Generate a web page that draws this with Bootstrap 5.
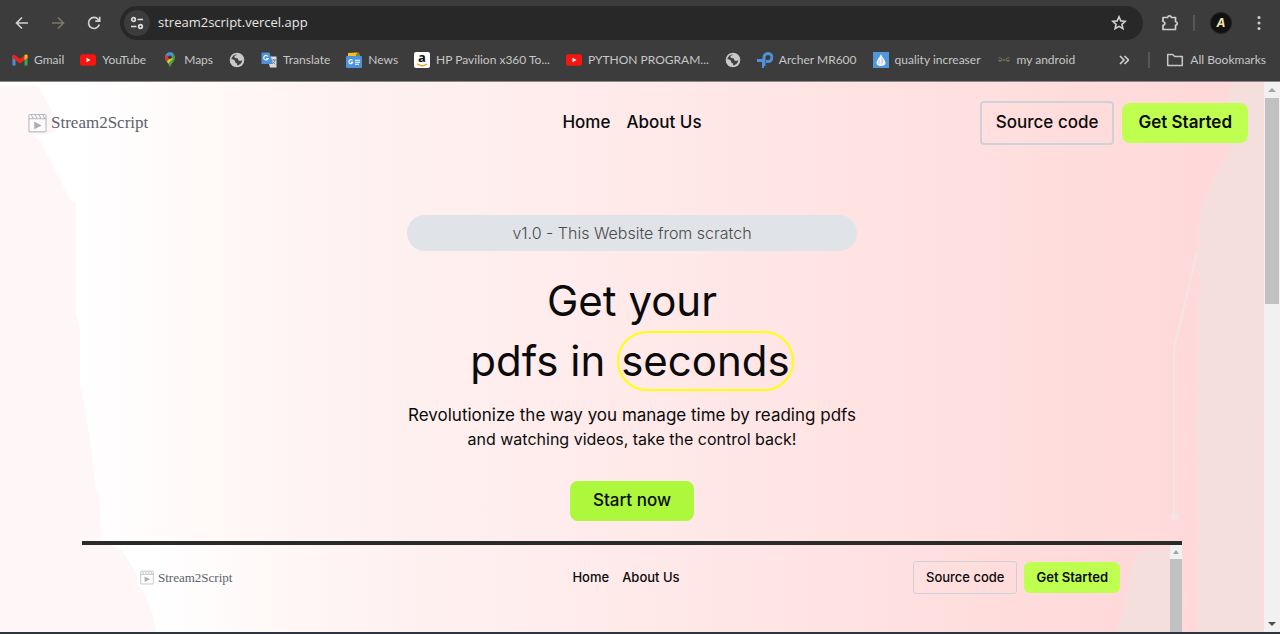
<!DOCTYPE html>
<html lang="en">
<head>
<meta charset="utf-8">
<meta name="viewport" content="width=device-width, initial-scale=1">
<title>Stream2Script</title>
<link href="https://cdn.jsdelivr.net/npm/bootstrap@5.3.0/dist/css/bootstrap.min.css" rel="stylesheet">
<style>
  :root { --ui: "Open Sans", "Noto Sans", sans-serif; --page: Inter, "Open Sans", sans-serif; }
  body { background: #2f353f; font-family: var(--page); color: #0b0b0b; }
  a { color: inherit; text-decoration: none; }
  svg { display: block; flex: none; }

  .browser-top { background: #3c3c3c; color: #c7c7c7; font-family: var(--ui); border-bottom: 1px solid #8b8785; }
  .toolbar-row { height: 46px; padding: 0 13px 0 14px; }
  .tool-btn { width: 16px; height: 24px; padding: 0; border: 0; background: none; color: #d0d0d0; display: grid; place-items: center; }
  .tool-btn.dim { color: #7d766f; }
  .address { height: 34px; background: #282828; padding: 0 16px 0 4px; margin: 0 18px 0 2px; }
  .address input { background: none; border: 0; outline: 0; color: #e6e6e6; font-size: 13px; min-width: 0; padding: 0; }
  .site-info { width: 26px; height: 26px; background: #3c3c3c; }
  .divider { width: 2px; height: 16px; background: #5b5551; }
  .profile { width: 20px; height: 20px; border-radius: 50%; background: #111; box-shadow: 0 0 0 1px #222; color: #efe3a8; font: italic bold 12px/20px var(--page); text-align: center; }
  .bookmark-row { height: 35px; padding: 0 14px 7px 12px; font-family: Lato, var(--ui); font-size: 12px; white-space: nowrap; }
  .bookmark-row a { display: flex; align-items: center; gap: 6px; }

  .page-area { min-height: 0; position: relative; margin-bottom: 2px; }
  .canvas-bg { background: linear-gradient(to right, #fff 6%, #fffaf9 15%, #fff3f3 25%, #ffe9e9 52%, #ffe0e0 75%, #ffd9d9 95%); }
  .backdrop { position: absolute; inset: 0; width: 100%; height: 100%; }
  .stack { position: relative; }

  .site-head { display: grid; grid-template-columns: 1fr auto 1fr; align-items: center; padding-top: 19px; }
  .site-head .side-start { padding-left: 28px; }
  .site-head .side-end { padding-right: 16px; gap: 8px; }
  .brand-name { font-family: "Liberation Serif", serif; font-size: 17px; color: #5b626e; }
  .site-nav { gap: 16px; font-weight: 500; font-size: 17px; }
  .btn-source, .btn-go { --bs-btn-color: #0b0b0b; --bs-btn-font-weight: 500; --bs-btn-font-size: 17px; --bs-btn-padding-x: 16px; --bs-btn-padding-y: 0; white-space: nowrap; }
  .btn-source { --bs-btn-border-width: 2px; --bs-btn-border-color: #ced2d6; --bs-btn-border-radius: 4px; height: 44px; --bs-btn-padding-x: 14px; }
  .btn-go { --bs-btn-bg: #bfff50; --bs-btn-border-width: 0; --bs-btn-border-radius: 8px; --bs-btn-font-weight: 600; height: 40px; }

  .hero { padding-top: 70px; }
  .version { width: 450px; max-width: 100%; height: 36px; background: #e0e4e9; color: #4c4a4a; font-size: 16px; font-weight: 300; }
  .headline { font-size: 42px; line-height: 60px; font-weight: 400; margin: 20px 0 0; }
  .ring { display: inline-block; border: 2px solid #ffff0a; border-radius: 30px; line-height: 56px; padding: 0 2px; }
  .pitch { font-size: 16px; line-height: 24px; margin: 12px 0 0; }
  .pitch-lead { display: block; font-size: 17px; }
  .btn-start { --bs-btn-bg: #adf73c; --bs-btn-font-weight: 500; margin: 30px 0 20px; min-width: 124px; }

  .preview { width: 100%; max-width: 1100px; border-top: 4px solid #282b2a; min-height: 0; }
  .preview .site-head { padding-top: 16px; }
  .preview .side-start { padding-left: 58px; }
  .preview .side-end { padding-right: 50px; gap: 7px; }
  .preview .brand-name { font-size: 13px; }
  .preview .site-nav { gap: 13px; font-size: 13px; }
  .preview .btn-source, .preview .btn-go { --bs-btn-font-size: 13px; --bs-btn-padding-x: 12px; --bs-btn-padding-y: 0; }
  .preview .btn-source { height: 33px; --bs-btn-border-width: 1px; --bs-btn-border-radius: 3px; }
  .preview .btn-go { height: 31px; --bs-btn-border-radius: 6px; }

  .scroll-track { width: 16px; background: #f1f1f1; padding: 0 1px; }
  .scroll-thumb { background: #c1c1c1; height: 206px; }
  .scroll-cap { height: 16px; display: grid; place-items: center; flex: none; }
  .preview .scroll-track { width: 12px; padding: 0; }
  .preview .scroll-cap { height: 14px; }
  .preview .scroll-thumb { height: auto; flex: 1; }
</style>
</head>
<body class="vh-100 d-flex flex-column overflow-hidden">

<svg width="0" height="0" class="position-absolute" aria-hidden="true">
  <symbol id="globe" viewBox="0 0 16 16"><circle cx="8" cy="8" r="7.3" fill="#c8c8c8"/><path d="M8 2.500 5.300 4.300 6 6l2.700.300.600 2.200 2.700.500 1.200-1.200C13.300 10.500 11 13.200 8 13.500l.3-1.800-2-1.200-.3-1.800L4 7.300l-1.500.2C2.700 4.700 5 2.500 8 2.500z" fill="#3f3f3f"/></symbol>
  <symbol id="tube" viewBox="0 0 16 16"><rect y="2.300" width="16" height="11.500" rx="2.500" fill="#f6150f"/><path d="M6.500 5.700v4.600l4-2.300z" fill="#fff"/></symbol>
  <symbol id="clap" viewBox="0 0 20 20"><rect x="1" y="1" width="18" height="18.300" rx="1.200" fill="#fff" fill-opacity=".6" stroke="#b9bdc3" stroke-width="1.200"/><path d="M1 5.500h18M3.500 1.500l2 3.500M7.500 1.500l2 3.500M11.500 1.500l2 3.500M15.500 1.500l2 3.500" stroke="#b2b6bb" stroke-width="1.100"/><path d="M6.500 8.500v8l8-4z" fill="#b0b0b0"/></symbol>
</svg>

<header class="browser-top flex-shrink-0">
  <div class="toolbar-row d-flex align-items-center">
    <div class="d-flex gap-3 me-3">
      <button class="tool-btn" aria-label="Back"><svg width="16" height="16" fill="none" stroke="currentColor" stroke-width="1.700"><path d="M14 8H3M8 2.500 2.500 8 8 13.500"/></svg></button>
      <button class="tool-btn dim ms-1" aria-label="Forward"><svg width="16" height="16" fill="none" stroke="currentColor" stroke-width="1.700"><path d="M2 8h11M8 2.500 13.500 8 8 13.500"/></svg></button>
      <button class="tool-btn ms-1" aria-label="Reload"><svg width="16" height="16" fill="none" stroke="currentColor" stroke-width="1.700"><path d="M13.300 9.500A5.500 5.500 0 1 1 12.300 4.500L13.500 6M13.700 1.800V6.200H9.300"/></svg></button>
    </div>
    <div class="address d-flex align-items-center flex-fill rounded-pill">
      <span class="site-info rounded-circle d-grid align-items-center justify-content-center flex-shrink-0"><svg width="14" height="14" fill="none" stroke="#e0e0e0" stroke-width="1.700"><circle cx="3.500" cy="3.500" r="1.800"/><path d="M7.500 3.500H13M1 10.500h5.500"/><circle cx="10.500" cy="10.500" r="1.800"/></svg></span>
      <input class="flex-fill ms-2" type="text" value="stream2script.vercel.app" aria-label="Address">
      <button class="tool-btn" aria-label="Bookmark this page"><svg width="16" height="16" fill="none" stroke="currentColor" stroke-width="1.600"><path d="m8 1.800 1.800 4.100 4.500.4-3.400 3 1 4.400L8 11.400l-3.900 2.300 1-4.400-3.400-3 4.500-.4z"/></svg></button>
    </div>
    <button class="tool-btn me-3" aria-label="Extensions"><svg width="18" height="18" fill="none" stroke="currentColor" stroke-width="1.700"><path d="M2 3.500h4.500c.8-2.300 3.200-2.300 4 0h4v4.200c2.400.5 2.400 3.100 0 3.600v4.200H2v-4.200c2.600-.5 2.600-3.300 0-3.800z" stroke-linejoin="round"/></svg></button>
    <span class="divider"></span>
    <span class="profile ms-3 me-3">A</span>
    <button class="tool-btn ms-1" aria-label="Menu"><svg width="4" height="16" fill="currentColor"><circle cx="2" cy="2.500" r="1.500"/><circle cx="2" cy="8" r="1.500"/><circle cx="2" cy="13.500" r="1.500"/></svg></button>
  </div>
  <nav class="bookmark-row d-flex align-items-center gap-3" aria-label="Bookmarks">
    <a href="#"><svg width="16" height="16"><path d="M.5 4v9.500h3V7" fill="#4a8fe2"/><path d="M12.500 7v6.500h3V4z" fill="#3fa34d"/><path d="M.5 3.500V6l7.500 5.500L15.500 6V3.500c-1-1.500-2.500-1-3 0L8 7 3.500 3.500c-1-1-2.500-1-3 0z" fill="#ee241c"/><path d="M12.500 3.500V8l3-2V3.500c-.7-1.500-2.500-1-3 0z" fill="#f8bd18"/></svg>Gmail</a>
    <a href="#"><svg width="16" height="16"><use href="#tube"/></svg>YouTube</a>
    <a href="#"><svg width="16" height="16" viewBox="-1 0 16 16"><path d="M7 15.700C6 11 2 9.500 2 5.200a5 5 0 0 1 10 0C12 9.500 8 11 7 15.700z" fill="#43a24b"/><path d="M2.200 6.500A5 5 0 0 1 10.500 1.700L7 5.800 4 9.500z" fill="#4a90df"/><path d="M2.200 6.700c-.4-1.700 0-2.800.9-4L7 5.500 4 9.300z" fill="#e5352b"/><path d="m4 9.500 5-5 .5 2.500-4 4.500z" fill="#f5c022"/><circle cx="7" cy="5.300" r="1.800" fill="#333"/></svg>Maps</a>
    <a href="#" aria-label="Site"><svg width="16" height="16"><use href="#globe"/></svg></a>
    <a href="#"><svg width="16" height="16"><path d="M6 4.500h9.500v11H9z" fill="#d9dcdf"/><path d="M.5.500h8l3.500 11.500H.5z" fill="#4e92d9"/><path d="M7 4.500A2.300 2.300 0 1 0 7.200 6.500H5.200" fill="none" stroke="#fff" stroke-width="1.100"/><path d="M10.500 8h4.500M12.800 7v1M14 8c-.3 2-1.500 3-2.500 3.700M11.500 9.500l3 3" fill="none" stroke="#707b85" stroke-width=".9"/></svg>Translate</a>
    <a href="#"><svg width="16" height="16"><path d="M2 3 13 0l1 4z" fill="#e53a2d"/><path d="m2 1 9-.5L12 4H2z" fill="#f6be20"/><path d="m10 2 4 .5V5h-4z" fill="#43a24b"/><rect y="4" width="16" height="12" rx="1" fill="#4e92d9"/><path d="M6.500 8.500a2 2 0 1 0 .3 1.700H5M9 8.300h5M9 10.300h5M9 12.300h4" fill="none" stroke="#fff" stroke-width="1.100"/></svg>News</a>
    <a href="#"><svg class="overflow-visible" width="16" height="16"><rect width="16" height="16" rx="2" fill="#fff"/><text x="8" y="10" text-anchor="middle" font-family="Open Sans" font-weight="700" font-size="13" fill="#111">a</text><path d="M3 11.800c3 2.300 7 2.300 10 .2" fill="none" stroke="#e9a125" stroke-width="1.400"/></svg>HP Pavilion x360 To...</a>
    <a href="#"><svg width="16" height="16"><use href="#tube"/></svg>PYTHON PROGRAM...</a>
    <a href="#" aria-label="Site"><svg width="16" height="16"><use href="#globe"/></svg></a>
    <a href="#"><svg width="16" height="16" fill="none" stroke="#4e92d9"><path d="M0 8.500h6.500M7 14V5.500a4 4 0 1 1 4 4H9" stroke-width="3"/><path d="M6 10v6" stroke-width="2"/></svg>Archer MR600</a>
    <a href="#"><svg width="16" height="16"><path d="M0 0h16v16H0z" fill="#5197dc"/><path d="M8 2c1 3 4.500 6 4.500 9 0 2-2 3-4.500 3s-4.500-1-4.500-3C3.500 8 7 5 8 2z" fill="#f4f6f8"/><path d="M6 8v4M9 6v6" stroke="#9ab" stroke-width=".7"/></svg>quality increaser</a>
    <a href="#"><svg width="14" height="16" fill="none" stroke="#77705a"><path d="M1.500 6H4a1.800 1.800 0 1 1-2.500 2.500H5.500M12.500 6H10a1.800 1.800 0 1 0 2.500 2.500H8.500"/><path d="M6 8h2" stroke="#6a9b2c"/></svg>my android</a>
    <span class="d-flex align-items-center gap-3 ms-auto">
      <button class="tool-btn" aria-label="More bookmarks"><svg width="10" height="10" fill="none" stroke="currentColor" stroke-width="1.600"><path d="m1 1 4 4-4 4M5.500 1l4 4-4 4"/></svg></button>
      <span class="divider"></span>
      <a href="#"><svg width="18" height="14" fill="none" stroke="currentColor" stroke-width="1.500"><path d="M1.700 1.500h5l2 2h7.600v9H1.700z" stroke-linejoin="round"/></svg>All Bookmarks</a>
    </span>
  </nav>
</header>

<div class="page-area d-flex flex-fill">
  <div class="canvas-bg position-relative flex-fill overflow-hidden">
    <svg class="backdrop" viewBox="0 0 1264 550" preserveAspectRatio="none" aria-hidden="true">
      <path d="M0 4h38l18 32v14l-22 4 7 6 30 59 5 2v110l4 18v50l4 20 8 55 3 30 4 10 3 45v12l12 1 18 14 14 25 8 25v14H0z" fill="#fff6f7"/>
      <path d="M1264 1h-30l-6 6-2 33 8 24-6 5-25 50-5 30-1 40 4 12-4 20 2 28-2 35 1 25-3 35 3 40-1 32 2 40-3 25 2 30-1 39h66z" fill="#f4dfdc"/>
      <path d="m1197 170-23 97v168" fill="none" stroke="#f2e6e3" stroke-width="2"/><circle cx="1174.500" cy="435" r="3.500" fill="#f2e6e3"/>
    </svg>
    <div class="stack h-100 d-flex flex-column align-items-center">
      <div class="site-head w-100">
        <a href="#" class="side-start d-flex align-items-center gap-1"><svg width="19" height="20"><use href="#clap"/></svg><span class="brand-name">Stream2Script</span></a>
        <nav class="site-nav d-flex"><a href="#">Home</a><a href="#">About Us</a></nav>
        <div class="side-end d-flex align-items-center justify-content-end"><button class="btn btn-source">Source code</button><button class="btn btn-go">Get Started</button></div>
      </div>
      <main class="hero d-flex flex-column align-items-center text-center">
        <div class="version rounded-pill d-flex align-items-center justify-content-center">v1.0 - This Website from scratch</div>
        <h1 class="headline">Get your<br>pdfs in <span class="ring">seconds</span></h1>
        <p class="pitch"><span class="pitch-lead">Revolutionize the way you manage time by reading pdfs</span>and watching videos, take the control back!</p>
        <button class="btn btn-go btn-start">Start now</button>
      </main>
      <section class="preview d-flex flex-fill" aria-label="Site preview">
        <div class="canvas-bg position-relative flex-fill overflow-hidden">
          <svg class="backdrop" viewBox="0 0 1088 87" preserveAspectRatio="none" aria-hidden="true">
            <path d="M0 0h28l12 6 15 23v10l8 11 8 20 3 17H0z" fill="#fff6f7"/>
            <path d="M1088 4h-24l-8 3-6 14-6 28-5 25-6 13h55z" fill="#f4dfdc"/>
          </svg>
          <div class="stack site-head w-100">
            <a href="#" class="side-start d-flex align-items-center gap-1"><svg width="14" height="15"><use href="#clap"/></svg><span class="brand-name">Stream2Script</span></a>
            <nav class="site-nav d-flex"><a href="#">Home</a><a href="#">About Us</a></nav>
            <div class="side-end d-flex align-items-center justify-content-end"><button class="btn btn-source">Source code</button><button class="btn btn-go">Get Started</button></div>
          </div>
        </div>
        <div class="scroll-track d-flex flex-column flex-shrink-0">
          <span class="scroll-cap"><svg width="6" height="4"><path d="M0 4h6L3 0z" fill="#a3a3a3"/></svg></span>
          <span class="scroll-thumb"></span>
        </div>
      </section>
    </div>
  </div>
  <div class="scroll-track d-flex flex-column flex-shrink-0">
    <span class="scroll-cap"><svg width="8" height="4"><path d="M0 4h8L4 0z" fill="#a3a3a3"/></svg></span>
    <span class="scroll-thumb"></span>
    <span class="scroll-cap mt-auto"><svg width="8" height="4"><path d="M0 0h8L4 4z" fill="#505050"/></svg></span>
  </div>
</div>

<script src="https://cdn.jsdelivr.net/npm/bootstrap@5.3.0/dist/js/bootstrap.bundle.min.js"></script>
</body>
</html>
